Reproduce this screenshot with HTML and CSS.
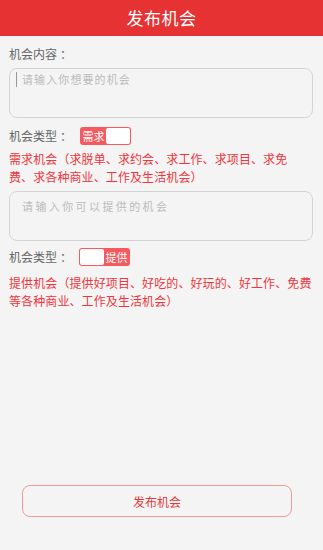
FILE: index.html
```html
<!DOCTYPE html>
<html lang="zh">
<head>
<meta charset="utf-8">
<title>发布机会</title>
<link rel="stylesheet" href="styles.css">
</head>
<body>
<div class="page">
  <header class="header">发布机会</header>
  <main class="content">
    <div class="label first">机会内容<span class="colon">：</span></div>
    <div class="textbox"><span class="cursor"></span><span class="ph ph1">请输入你想要的机会</span></div>

    <div class="type-row">
      <span class="label">机会类型<span class="colon">：</span></span>
      <span class="toggle t1"><span class="seg on">需求</span><span class="seg off"></span></span>
    </div>
    <p class="note n1">需求机会（求脱单、求约会、求工作、求项目、求免<br>费、求各种商业、工作及生活机会）</p>

    <div class="textbox tb2"><span class="ph ph2">请输入你可以提供的机会</span></div>

    <div class="type-row r2">
      <span class="label">机会类型<span class="colon">：</span></span>
      <span class="toggle t2"><span class="seg off"></span><span class="seg on">提供</span></span>
    </div>
    <p class="note n2">提供机会（提供好项目、好吃的、好玩的、好工作、免费<br>等各种商业、工作及生活机会）</p>
  </main>
  <div class="footer">
    <button class="submit">发布机会</button>
  </div>
</div>
</body>
</html>
```

FILE: styles.css
```css
html, body {
  margin: 0;
  padding: 0;
  background: #f4f4f4;
}
body {
  font-family: "Noto Sans CJK SC", "Noto Sans", sans-serif;
}
.page {
  min-height: 550px;
  display: flex;
  flex-direction: column;
}
.header {
  height: 36px;
  line-height: 36px;
  background: #e63232;
  color: #fff;
  text-align: center;
  font-size: 17px;
  letter-spacing: 0.5px;
}
.content {
  padding: 0 10px 0 9px;
}
.label {
  font-size: 12px;
  color: #666;
  line-height: 20px;
}
.colon {
  padding-left: 3px;
}
.label.first {
  margin-top: 8px;
}
.textbox {
  margin-top: 4px;
  height: 48px;
  border: 1px solid #d4d4d4;
  border-radius: 8px;
  background: #f4f4f4;
  display: flex;
  align-items: flex-start;
  padding: 0 0 0 6px;
  box-sizing: content-box;
}
.cursor {
  width: 1px;
  height: 15px;
  background: #999;
  margin-top: 3px;
}
.ph {
  font-size: 11px;
  color: #bbb;
  line-height: 20px;
}
.ph1 {
  margin-left: 5px;
  letter-spacing: 1.1px;
}
.tb2 {
  margin-top: 5px;
}
.ph2 {
  margin-left: 6px;
  margin-top: 4px;
  letter-spacing: 2.4px;
}
.type-row {
  display: flex;
  align-items: center;
  margin-top: 9px;
  height: 18px;
}
.type-row.r2 {
  margin-top: 7px;
}
.toggle {
  display: flex;
  width: 49px;
  height: 16px;
  padding: 1px;
  background: #f45a5e;
  border-radius: 3px;
  margin-left: 8px;
}
.t2 {
  margin-left: 7px;
}
.seg {
  height: 16px;
  font-size: 11px;
  line-height: 16px;
  color: #fff;
}
.seg.on {
  width: 25px;
  text-align: center;
}
.seg.off {
  width: 24px;
  background: #fff;
  border-radius: 2px;
}
.note {
  margin: 5px 0 0;
  font-size: 12px;
  line-height: 18px;
  color: #f0363c;
  letter-spacing: 0.1px;
}
.note.n2 {
  margin-top: 8px;
}
.footer {
  margin-top: auto;
  padding: 0 0 33px 22px;
}
.submit {
  width: 270px;
  height: 32px;
  border: 1px solid #f19a9a;
  border-radius: 8px;
  background: #f4f4f4;
  color: #e23a3a;
  font-family: "Noto Sans CJK SC", "Noto Sans", sans-serif;
  font-size: 12px;
  padding: 0;
  display: block;
}
```
